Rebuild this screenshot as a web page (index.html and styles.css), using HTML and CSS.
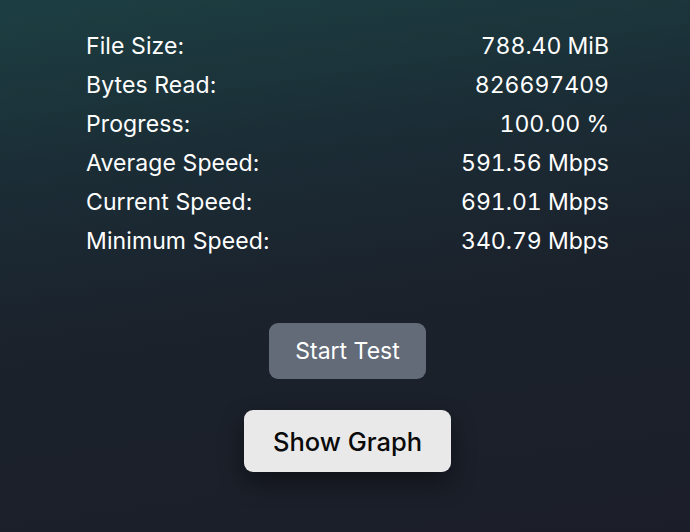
FILE: index.html
```html
<!DOCTYPE html>
<html>
<head>
<meta charset="utf-8">
<link rel="stylesheet" href="styles.css">
</head>
<body>
<main class="screen">
  <section class="stats">
    <div class="row"><span>File Size:</span><span class="val">788.40 MiB</span></div>
    <div class="row"><span>Bytes Read:</span><span class="val">826697409</span></div>
    <div class="row"><span>Progress:</span><span class="val">100.00 %</span></div>
    <div class="row"><span>Average Speed:</span><span class="val">591.56 Mbps</span></div>
    <div class="row"><span>Current Speed:</span><span class="val">691.01 Mbps</span></div>
    <div class="row"><span>Minimum Speed:</span><span class="val">340.79 Mbps</span></div>
  </section>
  <section class="actions">
    <button class="btn btn-start">Start Test</button>
    <button class="btn btn-graph">Show Graph</button>
  </section>
</main>
</body>
</html>
```
FILE: styles.css
```css
html, body {
  margin: 0;
  padding: 0;
  width: 690px;
  height: 532px;
  overflow: hidden;
}
body {
  background: linear-gradient(172deg, #1c3f42 0%, #1b2c35 30%, #1b222c 55%, #1b1e28 100%);
  font-family: Inter, "Noto Sans", sans-serif;
  color: #ffffff;
}
.screen {
  display: flex;
  flex-direction: column;
  height: 532px;
}
.stats {
  display: flex;
  flex-direction: column;
  padding: 27px 81px 0 86px;
}
.row {
  display: flex;
  justify-content: space-between;
  height: 39px;
  line-height: 39px;
  font-size: 23px;
  letter-spacing: 0.1px;
}
.val {
  font-variant-numeric: tabular-nums;
  letter-spacing: 0;
}
.actions {
  display: flex;
  flex-direction: column;
  align-items: center;
  gap: 31px;
  padding: 62px 0 0 5px;
}
.btn {
  border: none;
  border-radius: 9px;
  font-family: Inter, "Noto Sans", sans-serif;
  padding: 0;
}
.btn-start {
  width: 157px;
  height: 56px;
  background: #636b78;
  color: #ffffff;
  font-size: 23px;
}
.btn-graph {
  width: 207px;
  height: 62px;
  background: #e9e9e9;
  color: #0a0a0a;
  font-size: 25.5px;
  font-weight: 500;
  box-shadow: 0 10px 24px rgba(0, 0, 0, 0.45);
}
```
